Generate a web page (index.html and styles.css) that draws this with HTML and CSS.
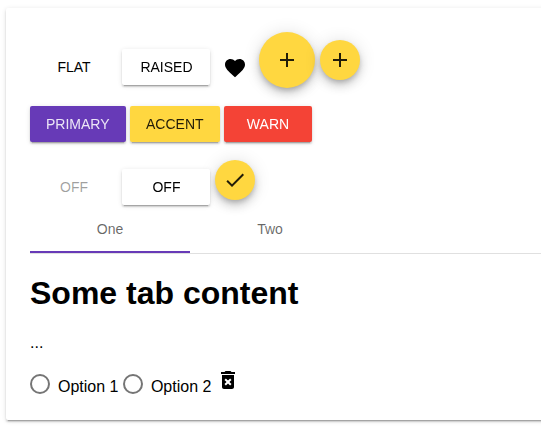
FILE: index.html
```html
<!DOCTYPE html>
<html lang="en">
<head>
<meta charset="utf-8">
<title>Components</title>
<link rel="stylesheet" href="styles.css">
</head>
<body>
<div class="page">
<main class="card">
  <div class="row row-basic">
    <button class="btn">FLAT</button>
    <button class="btn raised">RAISED</button>
    <svg class="icon heart" viewBox="0 0 24 24"><path d="M12 21.35l-1.45-1.32C5.4 15.36 2 12.28 2 8.5 2 5.42 4.42 3 7.5 3c1.74 0 3.41.81 4.5 2.09C13.09 3.81 14.76 3 16.5 3 19.58 3 22 5.42 22 8.5c0 3.78-3.4 6.86-8.55 11.54L12 21.35z"/></svg>
    <button class="fab"><svg class="icon" viewBox="0 0 24 24"><path d="M19 13h-6v6h-2v-6H5v-2h6V5h2v6h6v2z"/></svg></button>
    <button class="fab mini"><svg class="icon" viewBox="0 0 24 24"><path d="M19 13h-6v6h-2v-6H5v-2h6V5h2v6h6v2z"/></svg></button>
  </div>
  <div class="row row-colors">
    <button class="btn raised primary">PRIMARY</button>
    <button class="btn raised accent">ACCENT</button>
    <button class="btn raised warn">WARN</button>
  </div>
  <div class="row row-off">
    <button class="btn" disabled>OFF</button>
    <button class="btn raised">OFF</button>
    <button class="fab mini"><svg class="icon" viewBox="0 0 24 24"><path d="M9 16.17L4.83 12l-1.42 1.41L9 19 21 7l-1.41-1.41z"/></svg></button>
  </div>
  <div class="tabs">
    <div class="tab active">One</div>
    <div class="tab">Two</div>
  </div>
  <h1>Some tab content</h1>
  <p>...</p>
  <div class="options">
    <label class="option"><span class="radio"></span><span class="label">Option 1</span></label>
    <label class="option"><span class="radio"></span><span class="label">Option 2</span></label>
    <svg class="icon trash" viewBox="0 0 24 24"><path d="M6 19c0 1.1.9 2 2 2h8c1.1 0 2-.9 2-2V7H6v12zm2.46-7.12l1.41-1.41L12 12.59l2.12-2.12 1.41 1.41L13.41 14l2.12 2.12-1.41 1.41L12 15.41l-2.12 2.12-1.41-1.41L10.59 14l-2.13-2.12zM15.5 4l-1-1h-5l-1 1H5v2h14V4z"/></svg>
  </div>
</main>
</div>
</body>
</html>
```
FILE: styles.css
```css
* { box-sizing: border-box; }
body {
  margin: 0;
  background: #fff;
  color: #000;
  font: 16px/20px "Liberation Sans", Arial, sans-serif;
}
.page {
  width: 100%;
  height: 100vh;
  padding: 8px 0 0 6px;
  overflow: hidden;
}
.card {
  height: 412px;
  margin-right: -30px;
  padding: 24px;
  border-radius: 2px;
  background: #fff;
  box-shadow: 0 3px 1px -2px rgba(0, 0, 0, .2), 0 2px 2px 0 rgba(0, 0, 0, .14), 0 1px 5px 0 rgba(0, 0, 0, .12);
}
.row { display: flex; align-items: flex-start; gap: 4.45px; }
.row-basic { height: 74px; }
.row-basic .btn { margin-top: 17px; }
.row-colors { height: 54px; }
.row-off { height: 45px; }
.row-off .btn { margin-top: 9px; }
.btn {
  min-width: 88px;
  height: 36px;
  padding: 0 16px;
  border: 0;
  border-radius: 2px;
  background: transparent;
  color: #000;
  font: 14px/36px "Liberation Sans", Arial, sans-serif;
}
.btn:disabled { color: rgba(0, 0, 0, .38); }
.raised {
  background: #fff;
  box-shadow: 0 3px 1px -2px rgba(0, 0, 0, .2), 0 2px 2px 0 rgba(0, 0, 0, .14), 0 1px 5px 0 rgba(0, 0, 0, .12);
  transform: translate3d(0, 0, 0);
}
.primary { background: #673ab7; color: rgba(255, 255, 255, .87); }
.accent { background: #ffd740; color: rgba(0, 0, 0, .87); }
.warn { background: #f44336; color: #fff; }
.icon { display: block; width: 24px; height: 24px; fill: currentColor; flex: none; }
.heart { margin: 24px 8px 0 7.7px; }
.fab {
  display: flex;
  align-items: center;
  justify-content: center;
  width: 56px;
  height: 56px;
  padding: 0;
  border: 0;
  border-radius: 50%;
  background: #ffd740;
  color: rgba(0, 0, 0, .87);
  box-shadow: 0 3px 5px -1px rgba(0, 0, 0, .2), 0 6px 10px 0 rgba(0, 0, 0, .14), 0 1px 18px 0 rgba(0, 0, 0, .12);
}
.mini { width: 40px; height: 40px; }
.row-basic .mini { margin: 8px 0 0 .4px; }
.tabs { display: flex; height: 49px; border-bottom: 1px solid #e0e0e0; }
.tab {
  width: 160px;
  height: 48px;
  border-bottom: 2px solid transparent;
  color: rgba(0, 0, 0, .6);
  font-size: 14px;
  line-height: 48px;
  text-align: center;
}
.active { border-color: #673ab7; }
h1 { margin: 21px 0 22px; font-size: 32px; line-height: 36px; }
p { margin: 0 0 13px; }
.options { display: flex; align-items: flex-start; }
.option { display: flex; margin: 8px 4.45px 0 0; }
.radio { width: 20px; height: 20px; margin-right: 8px; border: 2px solid #757575; border-radius: 50%; }
.label { padding-top: 3px; }
.trash { margin-top: 2px; }
```
